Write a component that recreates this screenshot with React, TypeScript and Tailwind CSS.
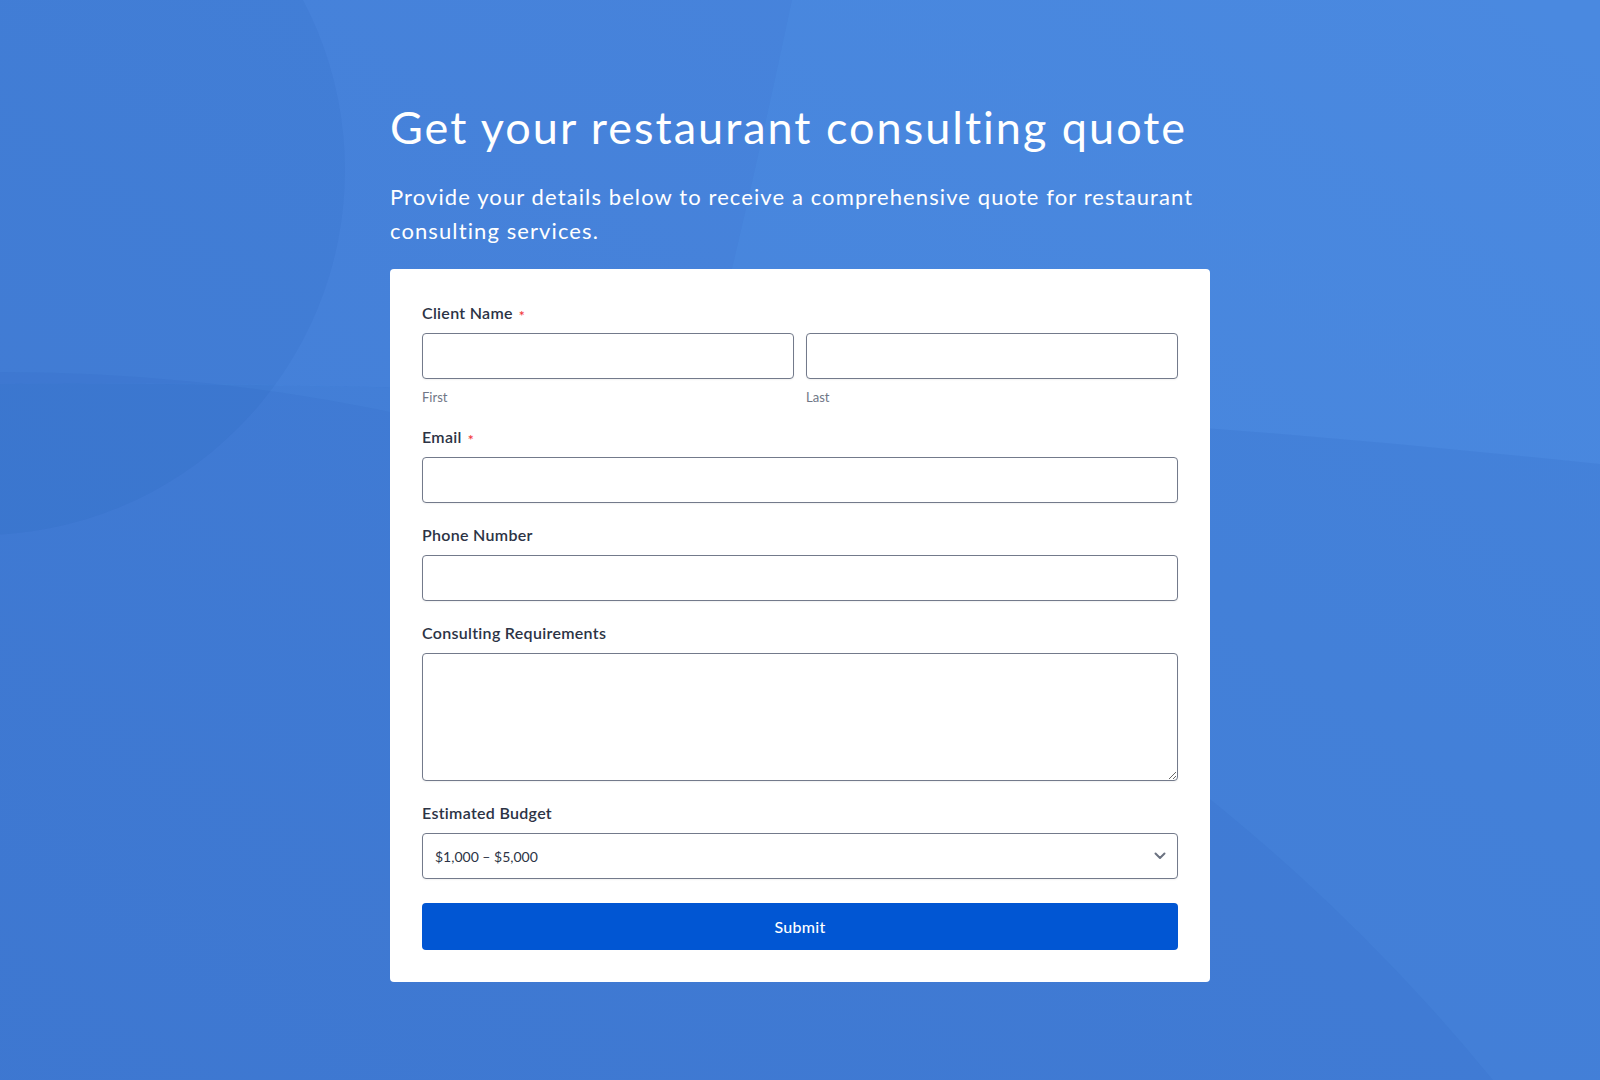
import React from "react";

type LabelProps = { children: React.ReactNode; required?: boolean };

function FieldLabel({ children, required }: LabelProps) {
  return (
    <label className="mb-2 flex h-6 items-center text-[16px] font-semibold tracking-[0.3px] text-[#2c3345]">
      {children}
      {required && (
        <span className="ml-1.5 translate-y-[3px] text-[14px] leading-none text-[#f23a3c]">*</span>
      )}
    </label>
  );
}

const inputCls =
  "h-[46px] w-full rounded border border-[#737a8b] bg-white px-3 text-[14px] text-[#2c3345] shadow-[0_1px_2px_rgba(0,0,0,0.06)] outline-none";

function Backdrop() {
  // soft overlapping shapes behind the form
  return (
    <svg
      className="absolute inset-0 h-full w-full"
      viewBox="0 0 1600 1080"
      preserveAspectRatio="none"
    >
      <defs>
        <linearGradient id="shade" x1="1" y1="0" x2="0" y2="1">
          <stop offset="0" stopColor="#143c96" stopOpacity="0" />
          <stop offset="1" stopColor="#143c96" stopOpacity="0.1" />
        </linearGradient>
      </defs>
      <rect width="1600" height="1080" fill="url(#shade)" />
      <path d="M0 0 L792 0 Q750 200 700 401 Q350 380 0 384 Z" fill="#143c96" fillOpacity="0.04" />
      <circle cx="-20" cy="170" r="365" fill="#143c96" fillOpacity="0.06" />
      <path d="M0 384 Q800 380 1600 464 L1600 1080 L0 1080 Z" fill="#143c96" fillOpacity="0.07" />
      <circle cx="0" cy="2300" r="1928" fill="#143c96" fillOpacity="0.05" />
    </svg>
  );
}

export default function App() {
  return (
    <div className="relative min-h-screen overflow-hidden bg-[#4a89e0] font-['Lato',sans-serif]">
      <Backdrop />

      <div className="relative mx-auto w-[820px] pt-[100px] pb-24">
        <h1 className="mb-[26px] text-[45px] font-normal leading-[1.2] tracking-[2px] text-white">
          Get your restaurant consulting quote
        </h1>
        <p className="mb-[21px] text-[22px] leading-[34px] tracking-[1.1px] text-white">
          Provide your details below to receive a comprehensive quote for restaurant consulting
          services.
        </p>

        <form className="flex flex-col gap-5 rounded bg-white px-8 py-8">
          <div>
            <FieldLabel required>Client Name</FieldLabel>
            <div className="grid grid-cols-2 gap-3">
              <div>
                <input className={inputCls} />
                <div className="mt-2.5 text-[13px] leading-4 text-[#6f7686]">First</div>
              </div>
              <div>
                <input className={inputCls} />
                <div className="mt-2.5 text-[13px] leading-4 text-[#6f7686]">Last</div>
              </div>
            </div>
          </div>

          <div>
            <FieldLabel required>Email</FieldLabel>
            <input type="email" className={inputCls} />
          </div>

          <div>
            <FieldLabel>Phone Number</FieldLabel>
            <input type="tel" className={inputCls} />
          </div>

          <div>
            <FieldLabel>Consulting Requirements</FieldLabel>
            <textarea className="block h-[128px] w-full rounded border border-[#737a8b] bg-white px-3 py-2 text-[14px] shadow-[0_1px_2px_rgba(0,0,0,0.06)] outline-none" />
          </div>

          <div>
            <FieldLabel>Estimated Budget</FieldLabel>
            <div className="relative">
              <select
                defaultValue="1k-5k"
                className={inputCls + " appearance-none pr-10"}
              >
                <option value="1k-5k">$1,000 – $5,000</option>
                <option value="5k-10k">$5,000 – $10,000</option>
                <option value="10k+">$10,000+</option>
              </select>
              <svg
                className="pointer-events-none absolute right-[12px] top-1/2 -translate-y-1/2"
                width="12"
                height="8"
                viewBox="0 0 12 8"
                fill="none"
              >
                <path d="M1.5 1.5 6 6l4.5-4.5" stroke="#6b7280" strokeWidth="2" strokeLinecap="round" strokeLinejoin="round" />
              </svg>
            </div>
          </div>

          <button
            type="button"
            className="mt-1 h-[47px] w-full rounded bg-[#0156d3] text-[16px] font-medium tracking-[0.3px] text-white"
          >
            Submit
          </button>
        </form>
      </div>
    </div>
  );
}
